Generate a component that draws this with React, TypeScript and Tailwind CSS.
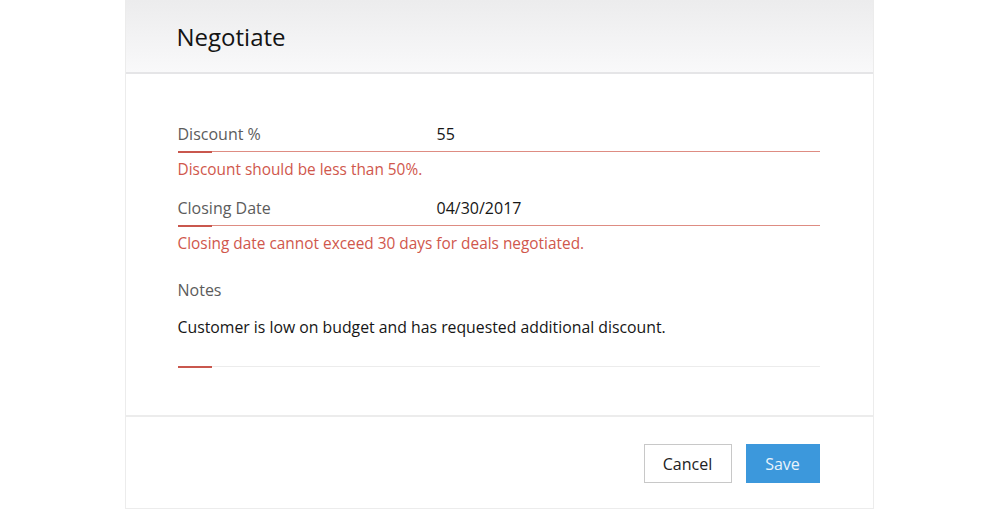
import React from "react";

const FONT = { fontFamily: "'Open Sans', Lato, Arial, sans-serif" };

function Underline({ tone }: { tone: "error" | "plain" }) {
  return (
    <div className="flex items-start w-full">
      <div className="w-[34px] h-[2px] bg-[#c9574d]" />
      <div className={tone === "error" ? "flex-1 h-px bg-[#de8c82]" : "flex-1 h-px bg-[#ececec]"} />
    </div>
  );
}

function Field({ label, value, error }: { label: string; value: string; error: string }) {
  return (
    <div className="flex flex-col">
      <div className="flex items-center h-[24px]">
        <span className="w-[259px] text-[16px] text-[#5c5c5c]">{label}</span>
        <span className="text-[16px] text-[#161616]">{value}</span>
      </div>
      <div className="mt-[5px]">
        <Underline tone="error" />
      </div>
      <p className="mt-[7px] h-[20px] leading-[20px] text-[15.4px] text-[#d0574c]">{error}</p>
    </div>
  );
}

export default function App() {
  return (
    <div className="w-full h-[510px] bg-white flex justify-center" style={FONT}>
      <div className="ml-[-2px] w-[749px] h-[509px] flex flex-col border-x border-b border-[#ececec]">
        <div className="h-[74px] shrink-0 flex items-center px-[51px] pt-[1px] bg-gradient-to-b from-[#ececed] to-[#f9f9fa] border-b-2 border-[#e5e5e7]">
          <h1 className="text-[24px] leading-[30px] text-[#141414]">Negotiate</h1>
        </div>

        <div className="flex-1 flex flex-col px-[52px] pr-[53px] pt-[48px]">
          <Field label="Discount %" value="55" error="Discount should be less than 50%." />
          <div className="mt-[16px]">
            <Field
              label="Closing Date"
              value="04/30/2017"
              error="Closing date cannot exceed 30 days for deals negotiated."
            />
          </div>
          <div className="mt-[24px] flex flex-col">
            <span className="h-[24px] leading-[24px] text-[16px] text-[#5c5c5c]">Notes</span>
            <p className="mt-[13px] h-[24px] leading-[24px] text-[15.8px] text-[#161616]">
              Customer is low on budget and has requested additional discount.
            </p>
            <div className="mt-[27px]">
              <Underline tone="plain" />
            </div>
          </div>
        </div>

        <div className="h-[93px] shrink-0 border-t-2 border-[#ececec] flex justify-end items-start gap-[14px] pt-[27px] pr-[53px]">
          <button className="w-[88px] h-[39px] border border-[#c8c8c8] bg-white text-[16px] text-[#222]">
            Cancel
          </button>
          <button className="w-[74px] h-[39px] bg-[#3c98dc] text-[16px] text-[#e8f3fb]">Save</button>
        </div>
      </div>
    </div>
  );
}
